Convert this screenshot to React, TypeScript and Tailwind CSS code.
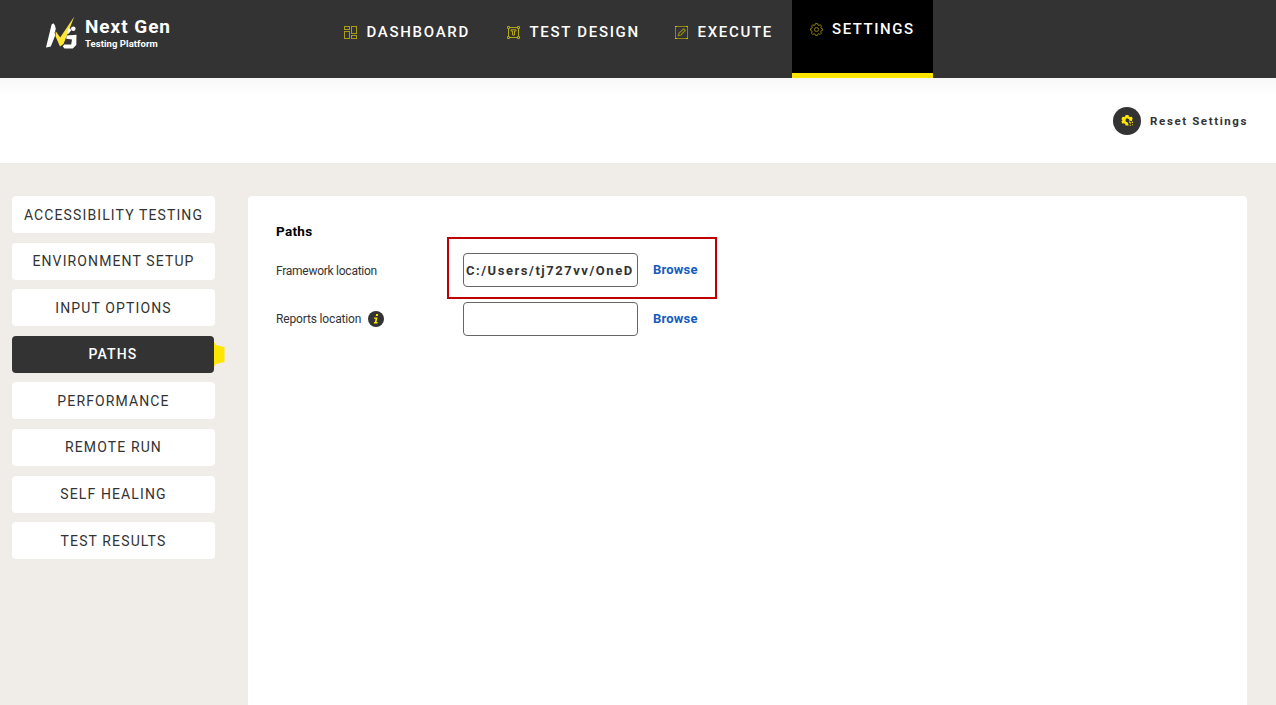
import type { ReactNode } from 'react';

function Logo() {
  return (
    <svg width="32" height="34" viewBox="0 0 32 34" fill="none">
      <path d="M0 31.5 L5.6 8.5 L7.4 7.3 L9 9.5 L9.8 13 L8.6 16.5 L9.2 19.5 L4.8 30.5 Z" fill="#fff" />
      <path d="M9.6 15 L14.2 21.5 L28.3 .5 L17.5 28 L14 30.5 L9.6 20.5 Z" fill="#ffe632" />
      <path d="M22.3 12.5 L24.5 12.5 L25 14.5 L22.8 17.5 L21 18 Z" fill="#fff" />
      <circle cx="27.3" cy="12.7" r="2.3" fill="#fff" />
      <path d="M20.7 19.5 L30.5 18.7 L30.3 29 L26.8 32.6 H18.5 L16.8 30.5 L18.2 28.5 H25.2 L26 23.5 L20.2 22.7 Z" fill="#fff" />
    </svg>
  );
}

function DashboardIcon() {
  return (
    <svg width="13" height="13" viewBox="0 0 13 13" fill="none" stroke="#a99c12" strokeWidth="1">
      <rect x=".5" y=".5" width="5" height="3" />
      <rect x=".5" y="5.5" width="5" height="7" />
      <rect x="7.5" y=".5" width="5" height="7" />
      <rect x="7.5" y="9.5" width="5" height="3" />
    </svg>
  );
}

function DesignIcon() {
  return (
    <svg width="13" height="13" viewBox="0 0 13 13" fill="none" stroke="#b5a70f" strokeWidth="1">
      <path d="M2 1.5H11M1.5 2V11M2 11.5H11M11.5 2V11" />
      <path d="M.5 .5h2v2h-2zM10.5 .5h2v2h-2zM.5 10.5h2v2h-2zM10.5 10.5h2v2h-2z" />
      <path d="M4 5V3.8H9V5H7.5V9H5.5V5Z" />
    </svg>
  );
}

function ExecuteIcon() {
  return (
    <svg width="13" height="13" viewBox="0 0 13 13" fill="none" stroke="#908514" strokeWidth="1">
      <path d="M.5 .5H12.5V12.5H.5Z" />
      <path d="M3.3 9.7L4 7L8.7 2.8L10.3 4.4L6 9Z" strokeWidth="1.2" />
      <path d="M0 .5h2M11 .5h2M0 12.5h2M11 12.5h2" stroke="#c9ba10" />
    </svg>
  );
}

function GearIcon() {
  return (
    <svg width="13" height="13" viewBox="0 0 13 13" fill="none" stroke="#8a7d00" strokeWidth="1">
      <path d="M5.4 .6h2.2l.4 1.5 1 .4L10.3 1.7l1.2 1.4-.7 1.3.3.9 1.3.4v1.7l-1.3.5-.4 1 .7 1.3-1.3 1.3-1.3-.8-.9.4-.4 1.3H5.5L5 11.1l-.9-.4-1.4.8-1.2-1.3.7-1.3-.4-1L.6 7.4V5.7l1.3-.5.4-.9L1.6 3 2.8 1.7l1.3.8.9-.4Z" />
      <circle cx="6.5" cy="6.5" r="2" />
    </svg>
  );
}

function ResetIcon() {
  return (
    <svg width="13" height="13" viewBox="0 0 14 14">
      <path d="M5 1h3l.5 1.6 1.3.7 1.7-.3 1.2 2.2-1 1.2.3 1.2-3-.4A2.1 2.1 0 1 0 7 8.9L8.2 11.5 8 12.3H5l-.5-1.6-1.2-.7-1.7.4L.4 8l1.2-1.2L.4 5.3 1.7 3l1.6.3 1.2-.7Z" fill="#ffe600" />
      <path d="M8.8 8.3L10.6 10.2M12.2 8v1.6M9.3 12h1.2M12 11.6h.9" stroke="#ffe600" strokeWidth="1.1" fill="none" />
    </svg>
  );
}

function NavItem({ icon, label, width }: { icon: ReactNode; label: string; width: string }) {
  return (
    <a className={`flex h-16 shrink-0 items-center pl-[18px] ${width}`}>
      <span className="mr-[9.5px]">{icon}</span>
      <span className="whitespace-nowrap">{label}</span>
    </a>
  );
}

function Header() {
  return (
    <header className="flex h-[78px] shrink-0 bg-[#333333] text-white">
      <div className="flex w-[326px] shrink-0 pl-[46px] pt-4">
        <Logo />
        <div className="pl-[7px]">
          <div className="text-[19px] leading-[22px] font-bold tracking-[0.95px]">Next Gen</div>
          <div className="text-[9.5px] leading-3 font-bold tracking-[0.07px]">Testing Platform</div>
        </div>
      </div>
      <nav className="flex text-[15px] font-medium tracking-[1.7px]">
        <NavItem icon={<DashboardIcon />} label="DASHBOARD" width="w-[163px]" />
        <NavItem icon={<DesignIcon />} label="TEST DESIGN" width="w-[168px]" />
        <NavItem icon={<ExecuteIcon />} label="EXECUTE" width="w-[135px]" />
        <a className="flex h-[78px] w-[141px] shrink-0 items-center border-b-[5px] border-[#ffe600] bg-black pb-[14px] pl-[18px]">
          <span className="mr-[9px]"><GearIcon /></span>
          <span className="tracking-[1.55px] whitespace-nowrap">SETTINGS</span>
        </a>
      </nav>
    </header>
  );
}

const sections = [
  'ACCESSIBILITY TESTING',
  'ENVIRONMENT SETUP',
  'INPUT OPTIONS',
  'PATHS',
  'PERFORMANCE',
  'REMOTE RUN',
  'SELF HEALING',
  'TEST RESULTS',
];

function Sidebar() {
  return (
    <aside className="flex w-[203px] shrink-0 flex-col gap-[9.6px] text-sm tracking-[1.12px]">
      {sections.map((label) =>
        label === 'PATHS' ? (
          <div key={label} className="relative flex h-[37px] w-[202px] items-center justify-center rounded bg-[#333333] font-medium text-white">
            {label}
            <svg className="absolute top-[6px] left-full" width="11" height="25" viewBox="0 0 11 25">
              <path d="M0 0L2 3L10.5 5V20L2 22L0 24.5Z" fill="#ffe600" />
            </svg>
          </div>
        ) : (
          <div key={label} className="flex h-[37px] items-center justify-center rounded bg-white whitespace-nowrap">
            {label}
          </div>
        ),
      )}
    </aside>
  );
}

function PathField({ value }: { value: string }) {
  return (
    <>
      <input
        type="text"
        readOnly
        value={value}
        className="h-[34px] w-[175px] rounded border border-[#666666] bg-white px-[2px] text-[13px] font-bold tracking-[1.54px] text-[#333333] outline-none"
      />
      <button className="ml-[15px] text-[13px] font-bold tracking-[0.2px] text-[#155cc1]">Browse</button>
    </>
  );
}

export default function App() {
  return (
    <div className="flex h-[705px] w-[1276px] flex-col overflow-hidden bg-[#f0ede8] font-['Roboto','Liberation_Sans',sans-serif] text-[#333333]">
      <Header />
      <div className="flex h-[85px] shrink-0 items-center justify-end bg-linear-to-b from-[#f7f7f7] to-white to-20% pr-[28px]">
        <span className="flex size-7 items-center justify-center rounded-full bg-[#333333]"><ResetIcon /></span>
        <span className="ml-[9px] pt-0.5 text-[11.5px] font-bold tracking-[1.6px]">Reset Settings</span>
      </div>
      <main className="flex min-h-0 flex-1 pt-[33px] pr-[29px] pl-3">
        <Sidebar />
        <section className="ml-[33px] flex-1 rounded-t bg-white pl-7">
          <h1 className="pt-[25px] text-[13.5px] leading-5 font-bold tracking-[0.3px] text-black">Paths</h1>
          <div className="flex h-[60px] items-center">
            <span className="w-[171px] text-xs tracking-[-0.26px]">Framework location</span>
            <div className="-mt-[7px] flex h-[62px] w-[270px] shrink-0 items-center border-2 border-[#c00000] pt-[5px] pl-[14px]">
              <PathField value="C:/Users/tj727vv/OneD" />
            </div>
          </div>
          <div className="flex h-[35px] items-center">
            <span className="flex w-[187px] items-center text-xs tracking-[-0.15px]">
              Reports location
              <span className="ml-[7px] flex size-4 items-center justify-center rounded-full bg-[#333333]">
                <svg width="6" height="10" viewBox="0 0 6 10"><path d="M3.2 0h2L4.8 2h-2ZM1.2 3.4h3.3L3.5 8h1.2l-.3 1.4H.8L1.1 8h.8l.7-3.2H.9Z" fill="#ffe600" /></svg>
              </span>
            </span>
            <PathField value="" />
          </div>
        </section>
      </main>
    </div>
  );
}
